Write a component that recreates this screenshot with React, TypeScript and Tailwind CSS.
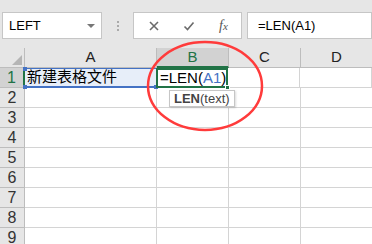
import React from "react";

const font = {
  fontFamily: '"Liberation Sans", "Noto Sans CJK SC", sans-serif',
};

const cols = [
  { key: "A", w: "w-[132px]" },
  { key: "B", w: "w-[72px]" },
  { key: "C", w: "w-[72px]" },
  { key: "D", w: "w-[72px]" },
];

const rows = [1, 2, 3, 4, 5, 6, 7, 8, 9];

const Toolbar = () => (
  <div className="flex h-[48px] items-start bg-[#e6e6e6] pt-[12px] pl-[2px]">
    <div className="flex h-[27px] w-[100px] items-center justify-between border border-[#c6c6c6] bg-white pr-[6px] pl-[6px]">
      <span className="text-[13px] text-black">LEFT</span>
      <span className="h-0 w-0 border-x-[4px] border-t-[4px] border-x-transparent border-t-[#777]" />
    </div>
    <div className="flex h-[27px] w-[31px] flex-col items-center justify-center gap-[2px]">
      <span className="h-[2px] w-[2px] bg-[#aaa]" />
      <span className="h-[2px] w-[2px] bg-[#aaa]" />
      <span className="h-[2px] w-[2px] bg-[#aaa]" />
    </div>
    <div className="flex h-[27px] w-[109px] items-center border border-[#c6c6c6] bg-white">
      <div className="flex w-[38px] justify-center pl-[2px]">
        <svg width="12" height="12" viewBox="0 0 12 12">
          <path d="M2 2 L10 10 M10 2 L2 10" stroke="#6b6b6b" strokeWidth="1.6" />
        </svg>
      </div>
      <div className="flex w-[34px] justify-center">
        <svg width="12" height="12" viewBox="0 0 12 12">
          <path d="M1.5 6.5 L4.5 9.5 L10.5 2.5" stroke="#6b6b6b" strokeWidth="1.6" fill="none" />
        </svg>
      </div>
      <div className="flex w-[35px] justify-center">
        <span className="text-[14px] text-[#555] italic" style={{ fontFamily: '"Liberation Serif", serif' }}>
          f<span className="text-[11px]">x</span>
        </span>
      </div>
    </div>
    <div className="ml-[5px] flex h-[27px] flex-1 items-center border border-[#c6c6c6] bg-white pl-[10px]">
      <span className="text-[13px] text-black">=LEN(A1)</span>
    </div>
  </div>
);

const HeaderRow = () => (
  <div className="flex h-[20px] bg-[#e6e6e6]">
    <div className="relative w-[25px] shrink-0 border-r border-b border-[#bdbdbd]">
      <svg className="absolute right-[2px] bottom-[2px]" width="10" height="10" viewBox="0 0 10 10">
        <path d="M10 0 L10 10 L0 10 Z" fill="#b5b5b5" />
      </svg>
    </div>
    {cols.map((c) => (
      <div
        key={c.key}
        className={`${c.w} flex shrink-0 items-center justify-center border-r border-b text-[15px] ${
          c.key === "B"
            ? "border-r-[#bdbdbd] border-b-[#217346] border-b-2 bg-[#d2d2d2] text-[#217346]"
            : "border-[#bdbdbd] text-[#222]"
        }`}
      >
        {c.key}
      </div>
    ))}
  </div>
);

const Row = ({ n }: { n: number }) => (
  <div className="flex h-[20px]">
    <div
      className={`flex w-[25px] shrink-0 items-center justify-center border-b text-[16px] ${
        n === 1
          ? "border-r-2 border-r-[#217346] border-b-[#bdbdbd] bg-[#d2d2d2] text-[#217346]"
          : "border-r border-[#bdbdbd] bg-[#e6e6e6] text-[#333]"
      }`}
    >
      {n}
    </div>
    {n === 1 ? (
      <>
        <div className="relative flex w-[131px] shrink-0 items-center border-t border-b-2 border-[#4472c4] bg-[#e7eef9] pl-[2px] text-[15px] text-black">
          新建表格文件
          <span className="absolute top-[-2px] left-[-2px] h-[4px] w-[4px] bg-[#4472c4]" />
          <span className="absolute bottom-[-3px] left-[-2px] h-[4px] w-[4px] bg-[#4472c4]" />
          <span className="absolute right-[-2px] bottom-[-3px] h-[4px] w-[4px] bg-[#4472c4]" />
        </div>
        <div className="relative flex w-[72px] shrink-0 items-center border-2 border-[#217346] pl-[2px] text-[15px] text-black">
          =LEN(<span className="text-[#4472c4]">A1</span>)
          <span className="absolute right-[-4px] bottom-[-4px] h-[5px] w-[5px] border border-white bg-[#217346]" />
        </div>
      </>
    ) : (
      <>
        <div className="w-[132px] shrink-0 border-r border-b border-[#d4d4d4]" />
        <div className="w-[72px] shrink-0 border-r border-b border-[#d4d4d4]" />
      </>
    )}
    <div className="w-[72px] shrink-0 border-r border-b border-[#d4d4d4]" />
    <div className="w-[72px] shrink-0 border-r border-b border-[#d4d4d4]" />
  </div>
);

export default function App() {
  return (
    <div className="relative h-[244px] w-[372px] overflow-hidden bg-white" style={font}>
      <Toolbar />
      <HeaderRow />
      {rows.map((n) => (
        <Row key={n} n={n} />
      ))}
      <div className="absolute top-[90px] left-[169px] flex h-[17px] items-center border border-[#c6c6c6] bg-white px-[4px] text-[13px] text-[#444] shadow-[1px_1px_2px_rgba(0,0,0,0.15)]">
        <span className="font-bold">LEN</span>(text)
      </div>
      <svg className="pointer-events-none absolute top-0 left-0" width="372" height="244">
        <ellipse cx="205" cy="86" rx="57" ry="44" fill="none" stroke="#ff3b3b" strokeWidth="2.5" />
      </svg>
    </div>
  );
}
